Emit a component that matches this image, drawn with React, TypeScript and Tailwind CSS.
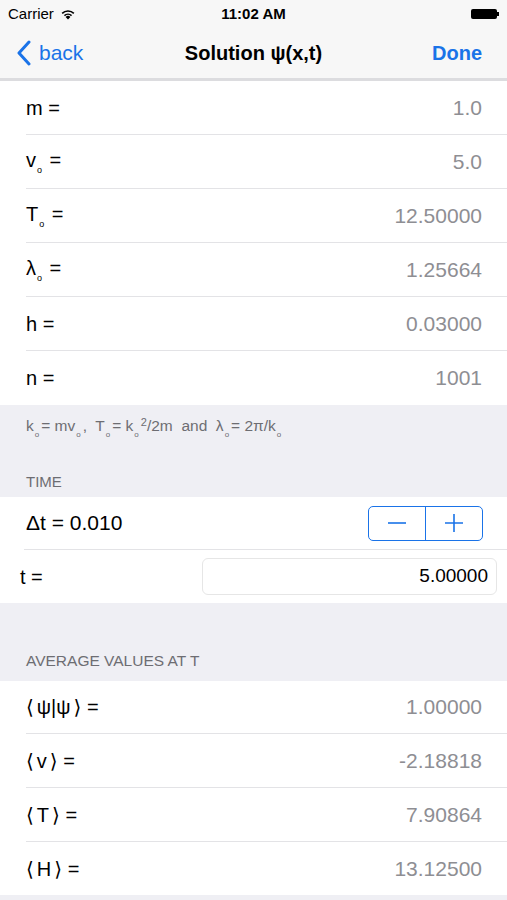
import React from "react";

const font = { fontFamily: '"Liberation Sans", Arial, "DejaVu Sans", sans-serif' };

// small "o" subscript used for v₀, T₀, λ₀, k₀
const Sub = ({ size = "text-[9px]" }: { size?: string }) => (
  <span className={`${size} align-[-6px] ml-[1px] mr-[2px]`}>o</span>
);

interface RowProps {
  label: React.ReactNode;
  value: string;
  h?: string;
  last?: boolean;
}

const Row = ({ label, value, h = "h-[54px]", last }: RowProps) => (
  <div className={`bg-white pl-[26px] ${h}`}>
    <div
      className={`flex h-full items-center justify-between pr-[25px] ${
        last ? "" : "border-b border-[#e3e3e6]"
      }`}
    >
      <span className="text-[20px] text-black">{label}</span>
      <span className="text-[21px] text-[#8e8e93]">{value}</span>
    </div>
  </div>
);

const Wifi = () => (
  <svg width="16" height="12" viewBox="0 0 16 12" className="ml-[6px]">
    <path d="M8 11.5 L5.6 8.9 A3.4 3.4 0 0 1 10.4 8.9 Z" fill="#000" />
    <path d="M3.9 7.1 A5.8 5.8 0 0 1 12.1 7.1 L11 8.2 A4.3 4.3 0 0 0 5 8.2 Z" fill="#000" />
    <path d="M1.6 4.8 A9 9 0 0 1 14.4 4.8 L13.3 5.9 A7.5 7.5 0 0 0 2.7 5.9 Z" fill="#000" />
  </svg>
);

const Avg = ({ children }: { children: React.ReactNode }) => (
  <>
    <span className="mr-[3px]">⟨</span>
    {children}
    <span className="ml-[3px]">⟩</span> =
  </>
);

export default function App() {
  return (
    <div className="min-h-[900px] w-[507px] bg-[#efeff4] overflow-hidden" style={font}>
      {/* status + nav */}
      <div className="bg-[#f7f7f7] border-b-[3px] border-[#dcdcdf]">
        <div className="relative flex h-[28px] items-center px-[8px] text-[15px]">
          <span>Carrier</span>
          <Wifi />
          <span className="absolute left-1/2 -translate-x-1/2 font-bold">11:02 AM</span>
          <div className="ml-auto flex items-center">
            <div className="h-[10px] w-[26px] rounded-[2px] bg-black" />
            <div className="h-[4px] w-[2px] bg-black" />
          </div>
        </div>
        <div className="relative flex h-[50px] items-center px-[16px]">
          <div className="flex items-center text-[#1a73e8]">
            <svg width="16" height="26" viewBox="0 0 16 26">
              <path d="M13 2 L3 13 L13 24" fill="none" stroke="#1a73e8" strokeWidth="3" strokeLinecap="round" strokeLinejoin="round" />
            </svg>
            <span className="ml-[7px] text-[21px]">back</span>
          </div>
          <span className="absolute left-1/2 -translate-x-1/2 text-[20px] font-bold">Solution ψ(x,t)</span>
          <span className="ml-auto mr-[9px] text-[20px] font-bold text-[#1a73e8]">Done</span>
        </div>
      </div>

      {/* parameters */}
      <Row label="m =" value="1.0" />
      <Row label={<>v<Sub /> =</>} value="5.0" />
      <Row label={<>T<Sub /> =</>} value="12.50000" />
      <Row label={<>λ<Sub /> =</>} value="1.25664" />
      <Row label="h =" value="0.03000" />
      <Row label="n =" value="1001" last />

      <div className="h-[92px] px-[26px] pt-[9px] text-[#6d6d72]">
        <div className="text-[15.5px]">
          k<Sub size="text-[8px]" />= mv<Sub size="text-[8px]" />,&nbsp; T<Sub size="text-[8px]" />= k
          <Sub size="text-[8px]" />
          <sup className="text-[11px]">2</sup>/2m&nbsp; and&nbsp; λ<Sub size="text-[8px]" />= 2π/k
          <Sub size="text-[8px]" />
        </div>
        <div className="mt-[30px] text-[15px]">TIME</div>
      </div>

      {/* time */}
      <div className="bg-white">
        <div className="ml-[24px] flex h-[53px] items-center justify-between border-b border-[#e3e3e6] pl-[2px] pr-[24px]">
          <span className="text-[21px]">Δt = 0.010</span>
          <div className="flex h-[35px] w-[115px] rounded-[5px] border border-[#1a73e8] text-[#1a73e8]">
            <div className="flex flex-1 items-center justify-center border-r border-[#1a73e8]">
              <svg width="20" height="20" viewBox="0 0 20 20">
                <path d="M1 10 H19" stroke="#1a73e8" strokeWidth="1.6" />
              </svg>
            </div>
            <div className="flex flex-1 items-center justify-center">
              <svg width="20" height="20" viewBox="0 0 20 20">
                <path d="M1 10 H19 M10 1 V19" stroke="#1a73e8" strokeWidth="1.6" />
              </svg>
            </div>
          </div>
        </div>
        <div className="flex h-[53px] items-center pl-[20px] pr-[10px]">
          <span className="text-[20px]">t =</span>
          <div className="ml-auto flex h-[37px] w-[295px] items-center justify-end rounded-[6px] border border-[#e6e6e6] px-[8px] text-[19px]">
            5.00000
          </div>
        </div>
      </div>

      <div className="flex h-[78px] items-end px-[26px] pb-[9px] text-[15.5px] text-[#6d6d72]">
        AVERAGE VALUES AT T
      </div>

      {/* averages */}
      <Row label={<Avg>ψ|ψ</Avg>} value="1.00000" h="h-[53px]" />
      <Row label={<Avg>v</Avg>} value="-2.18818" />
      <Row label={<Avg>T</Avg>} value="7.90864" />
      <Row label={<Avg>H</Avg>} value="13.12500" h="h-[53px]" last />
    </div>
  );
}
